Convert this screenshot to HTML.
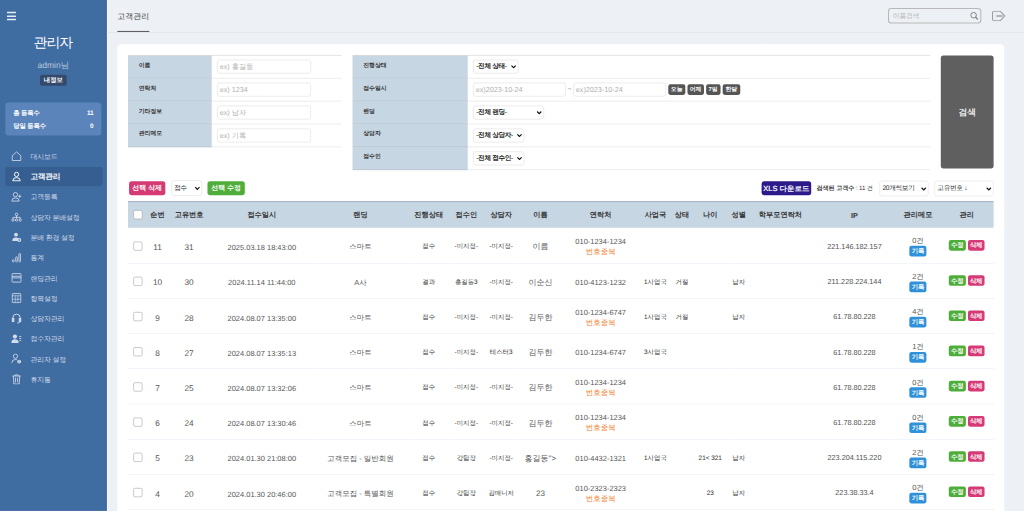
<!DOCTYPE html>
<html lang="ko"><head><meta charset="utf-8"><title>고객관리</title>
<style>
*{box-sizing:border-box;margin:0;padding:0}
html,body{width:1024px;height:511px;overflow:hidden;background:#edf0f5}
body{font-family:"Liberation Sans",sans-serif;color:#333;text-rendering:geometricPrecision}
#root{position:absolute;left:0;top:0;width:1920px;height:958px;transform:scale(0.533333);transform-origin:0 0;background:#edf0f5;overflow:hidden}
/* sidebar */
#side{position:absolute;left:0;top:0;width:200px;height:958px;background:#3f6ca1;color:#fff;box-shadow:inset -1.5px 0 0 #386196, 2px 0 0 #f8f9fc}
.burger{position:absolute;left:13px;top:22px;width:17px;height:16px}
.burger i{position:absolute;left:0;width:17px;height:3px;background:#e8eef6;border-radius:1px}
.sname{position:absolute;left:0;width:200px;top:59px;text-align:center;font-size:26px;line-height:40px;color:#fff;letter-spacing:-2px;text-indent:-2px}
.sadmin{position:absolute;left:0;width:200px;top:111.5px;text-align:center;font-size:16px;line-height:24px;color:#b8c7da}
.sinfo{position:absolute;left:75px;top:140px;width:50px;height:21px;background:#354a6a;border-radius:4px;font-size:12px;line-height:21px;text-align:center;font-weight:bold;color:#fff}
.stats{position:absolute;left:10px;top:192px;width:180px;height:62px;background:#5a84ba;border-radius:6px;font-size:12px;letter-spacing:-0.4px;font-weight:bold;color:#fff}
.stats div{position:absolute;left:15px;right:15px;height:20px;line-height:20px}
.stats b{position:absolute;right:0;top:0}
.menu{position:absolute;left:0;top:274px;width:200px}
.mi{position:relative;height:38px;line-height:40px;font-size:13px;letter-spacing:-0.3px;color:#d3dcea;padding-left:57px}
.mi.act{background:#365e90;margin:0 8px 0 10px;padding-left:47px;color:#fff;font-weight:bold;font-size:14.5px;letter-spacing:-0.5px;border-radius:4px;height:36px;line-height:38px;margin-top:1px;margin-bottom:1px}
.mi svg{position:absolute;left:21px;top:9px;width:20px;height:20px}
.mi.act svg{left:11px;top:8px}
/* header */
#head{position:absolute;left:200px;top:0;width:1720px;height:61px;border-bottom:1px solid #dcdfe6}
.title{position:absolute;left:20px;top:0;height:60px;line-height:58px;padding-top:1.5px;font-size:15px;color:#3a3a3a;border-bottom:2.6px solid #606060}
.hsearch{position:absolute;left:1465px;top:15px;width:175px;height:29px;border:2px solid #b8b8b8;border-radius:6px;font-size:12.5px;line-height:25px;color:#b0b0b0;padding-left:7px}
.hsearch svg{position:absolute;right:3px;top:5px}
.logout{position:absolute;left:1660px;top:20px}
/* card */
#card{position:absolute;left:220px;top:83px;width:1663px;height:900px;background:#fff;border-radius:8px}
.ft{position:absolute;top:20px;border-collapse:collapse;border-top:1.5px solid #c9c9c9}
.ft td{height:43px;border-bottom:1.5px solid rgba(0,0,0,0.14);vertical-align:middle;font-size:12px}
.ft td.lb{background:#c6d6e3;font-weight:bold;color:#333;padding-left:20px;padding-bottom:5px;font-size:11px}
.ft td.in{padding-left:10px}
.inp{display:inline-block;vertical-align:middle;width:176px;height:26px;border:1.5px solid #dcdcdc;border-radius:5px;font-size:13.5px;line-height:24px;color:#b0b0b0;padding-left:4px;white-space:nowrap;overflow:hidden}
.sel{display:inline-block;vertical-align:middle;position:relative;height:26px;border:1.5px solid #dcdcdc;border-radius:5px;font-size:12.5px;line-height:23px;color:#000;padding-left:5px;white-space:nowrap;font-weight:normal;letter-spacing:-0.7px;-webkit-text-stroke:0.3px #000}
.sel svg{position:absolute;right:3px;top:8px}
.dbtn{display:inline-block;vertical-align:middle;height:20px;line-height:20px;background:#555;color:#fff;font-size:11px;font-weight:bold;border-radius:4px;text-align:center;margin-left:4px}
.sbtn{position:absolute;left:1544px;top:21px;width:99px;height:212px;background:#5f5f5f;border-radius:5px;color:#fff;font-size:16.5px;font-weight:normal;-webkit-text-stroke:0.3px #fff;text-align:center;line-height:212px}
/* action row */
.btn{position:absolute;height:26px;line-height:26px;border-radius:5px;color:#fff;font-weight:bold;font-size:13px;text-align:center}
.asel{position:absolute;height:29px;border:1.5px solid #dedede;border-radius:5px;font-size:12.5px;line-height:26px;color:#222;padding-left:4.5px;white-space:nowrap;letter-spacing:-0.6px}
.asel svg{position:absolute;right:3px;top:10px}
.cnttxt{position:absolute;left:1311px;top:263px;font-size:11.5px;letter-spacing:-0.2px;line-height:16px;color:#333;white-space:nowrap}
/* table */
.lt{position:absolute;left:20px;top:294px;width:1623px;border-collapse:collapse;table-layout:fixed}
.lthbg{position:absolute;left:20px;top:294px;width:1623px;height:50px;background:#c6d6e3;border-top:2px solid #a9b5c0}
.lt th{height:50px;font-size:13.5px;font-weight:bold;color:#333;text-align:center;vertical-align:middle;white-space:nowrap;padding-top:3px}
.lt td{height:66px;border-bottom:1.5px solid #e6ebf1;text-align:center;vertical-align:middle;white-space:nowrap;color:#555;line-height:19px}
.cb{display:inline-block;position:relative;top:1.5px;width:17px;height:17px;border:1.5px solid #9d9d9d;border-radius:3px;background:#fff;vertical-align:middle}
.n,.dt,.l,.s,.nm,.ph,.dup,.ip,.cnt{position:relative}
th .cb{top:-1.5px}
.n{font-size:15.5px;color:#555;top:4.5px}
.dt{font-size:14px;color:#555;top:4.5px}
.l{font-size:14px;color:#555;top:3px}
.s{font-size:12px;color:#333;top:1.5px}
.nm{font-size:15px;color:#555;top:3px}
.ph{font-size:14px;color:#555;top:3px}
.dup{font-size:14px;color:#f27a1f;font-weight:normal;top:3px}
.ip{font-size:13.6px;color:#555;top:2px}
.cnt{font-size:14px;color:#555;top:2px}
.bd{display:inline-block;height:20px;line-height:20px;padding:0 4px;border-radius:4px;color:#fff;font-size:12px;font-weight:bold;letter-spacing:-0.3px}
.bd.pk{margin-left:4px}
.bd.bl{position:relative;top:2px}
.bl{background:#2f91da}
.gr{background:#4fae3a}
.pk{background:#d53a76}
</style></head><body>
<div id="root">
 <div id="side">
  <div class="burger"><i style="top:0"></i><i style="top:6.5px"></i><i style="top:13px"></i></div>
  <div class="sname">관리자</div>
  <div class="sadmin">admin님</div>
  <div class="sinfo">내정보</div>
  <div class="stats"><div style="top:9px">총 등록수<b>11</b></div><div style="top:34px">당일 등록수<b>0</b></div></div>
  <div class="menu">
   <div class="mi"><svg viewBox="0 0 20 20" fill="none" stroke="#d3dceb" stroke-width="1.6"><path d="M2 9 L10 2 L18 9 V18 H2 Z"/></svg>대시보드</div>
   <div class="mi act"><svg viewBox="0 0 20 20" fill="none" stroke="#fff" stroke-width="1.8"><circle cx="10" cy="6" r="4"/><path d="M3 18 Q3 12 10 12 Q17 12 17 18 Z"/></svg>고객관리</div>
   <div class="mi"><svg viewBox="0 0 20 20" fill="none" stroke="#d3dceb" stroke-width="1.6"><circle cx="8" cy="6" r="4"/><path d="M1 18 Q1 12 8 12 Q15 12 15 18 Z M16 6 V12 M13 9 H19"/></svg>고객등록</div>
   <div class="mi"><svg viewBox="0 0 20 20" fill="none" stroke="#d3dceb" stroke-width="1.6"><circle cx="10" cy="5" r="2.4"/><circle cx="3.2" cy="15.5" r="2.2"/><circle cx="10" cy="15.5" r="2.2"/><circle cx="16.8" cy="15.5" r="2.2"/><path d="M10 7.4 V13.3 M3.2 13.3 V10.5 H16.8 V13.3"/></svg>상담자 분배설정</div>
   <div class="mi"><svg viewBox="0 0 20 20" fill="#d3dceb"><circle cx="9" cy="5" r="3.6"/><path d="M2 17 Q2 10.5 9 10.5 Q12 10.5 13.5 12 V17 Z"/><circle cx="15" cy="15" r="3.8"/><circle cx="15" cy="15" r="1.5" fill="#3f6ca1"/></svg>분배 환경 설정</div>
   <div class="mi"><svg viewBox="0 0 20 20" fill="none" stroke="#d3dceb" stroke-width="1.6"><rect x="2.5" y="14" width="3" height="4" rx="1"/><rect x="8.5" y="8.5" width="3" height="9.5" rx="1"/><rect x="14.5" y="2.5" width="3" height="15.5" rx="1"/></svg>통계</div>
   <div class="mi"><svg viewBox="0 0 20 20" fill="none" stroke="#d3dceb" stroke-width="1.6"><rect x="1.5" y="2" width="17" height="16" rx="1"/><path d="M1.5 7 H18.5 M1.5 10 H18.5"/></svg>랜딩관리</div>
   <div class="mi"><svg viewBox="0 0 20 20" fill="none" stroke="#d3dceb" stroke-width="1.6"><rect x="2" y="1.5" width="16" height="17" rx="1"/><path d="M2 5.5 H18 M7.5 5.5 V18.5 M12.5 5.5 V18.5 M2 12 H18" stroke-width="1.2"/></svg>항목설정</div>
   <div class="mi"><svg viewBox="0 0 20 20" fill="none" stroke="#d3dceb" stroke-width="1.8"><path d="M3 12 V9 A7 7 0 0 1 17 9 V12"/><rect x="2" y="10" width="3" height="6" fill="#d3dceb"/><rect x="15" y="10" width="3" height="6" fill="#d3dceb"/><path d="M16 16 Q16 19 11 19"/></svg>상담자관리</div>
   <div class="mi"><svg viewBox="0 0 20 20" fill="#d3dceb"><circle cx="7" cy="6" r="4"/><path d="M0 18 Q0 11 7 11 Q14 11 14 18 Z"/><rect x="15" y="5" width="4" height="1.5"/><rect x="15" y="9" width="4" height="1.5"/><rect x="15" y="13" width="4" height="1.5"/></svg>접수자관리</div>
   <div class="mi"><svg viewBox="0 0 20 20" fill="none" stroke="#d3dceb" stroke-width="1.6"><circle cx="8" cy="5" r="4"/><path d="M1 18 Q1 11 8 11 Q10 11 11 12"/><circle cx="15" cy="15" r="3.6" fill="#d3dceb" stroke="none"/><path d="M15 13 V15.5 M15 16.8 V17.4" stroke="#3f6ca1" stroke-width="1.3"/></svg>관리자 설정</div>
   <div class="mi"><svg viewBox="0 0 20 20" fill="none" stroke="#d3dceb" stroke-width="1.6"><path d="M2 4 H18 M7 4 V2 H13 V4 M4 4 L5 19 H15 L16 4 M8 7 V16 M12 7 V16"/></svg>휴지통</div>
  </div>
 </div>
 <div id="head">
  <div class="title">고객관리</div>
  <div class="hsearch">이름검색<svg width="16" height="16" viewBox="0 0 16 16" fill="none" stroke="#808080" stroke-width="1.8"><circle cx="6.5" cy="6.5" r="5.2"/><path d="M10.3 10.3 L14.5 14.5" stroke-width="2.2"/></svg></div>
  <svg class="logout" width="26" height="20" viewBox="0 0 26 20" fill="none" stroke="#a0a0a0" stroke-width="2" stroke-linejoin="round"><path d="M15 1 H4 Q1 1 1 4 V16 Q1 19 4 19 H15 L24 10 Z"/><path d="M8 10 H20" stroke-width="2.6"/></svg>
 </div>
 <div id="card">
  <table class="ft" style="left:20px;width:400px">
   <col style="width:157px"><col>
   <tr><td class="lb">이름</td><td class="in"><span class="inp">ex) 홍길동</span></td></tr>
   <tr><td class="lb">연락처</td><td class="in"><span class="inp">ex) 1234</span></td></tr>
   <tr><td class="lb">기타정보</td><td class="in"><span class="inp">ex) 남자</span></td></tr>
   <tr><td class="lb">관리메모</td><td class="in"><span class="inp">ex) 기록</span></td></tr>
  </table>
  <table class="ft" style="left:441px;width:1083px">
   <col style="width:216px"><col>
   <tr><td class="lb">진행상태</td><td class="in"><span class="sel" style="width:85px">-전체 상태-<svg width="10" height="8" viewBox="0 0 10 8"><path d="M1 2 L5 6 L9 2" stroke="#111" stroke-width="2.2" fill="none"/></svg></span></td></tr>
   <tr><td class="lb">접수일시</td><td class="in"><span class="inp" style="width:174px">ex)2023-10-24</span> <span style="font-size:12px;color:#777">~</span> <span class="inp" style="width:174px">ex)2023-10-24</span><span class="dbtn" style="width:32px">오늘</span><span class="dbtn" style="width:31px">어제</span><span class="dbtn" style="width:27px">7일</span><span class="dbtn" style="width:33px">한달</span></td></tr>
   <tr><td class="lb">랜딩</td><td class="in"><span class="sel" style="width:133px">-전체 랜딩-<svg width="10" height="8" viewBox="0 0 10 8"><path d="M1 2 L5 6 L9 2" stroke="#111" stroke-width="2.2" fill="none"/></svg></span></td></tr>
   <tr><td class="lb">상담자</td><td class="in"><span class="sel" style="width:96px">-전체 상담자-<svg width="10" height="8" viewBox="0 0 10 8"><path d="M1 2 L5 6 L9 2" stroke="#111" stroke-width="2.2" fill="none"/></svg></span></td></tr>
   <tr><td class="lb">접수인</td><td class="in"><span class="sel" style="width:96px">-전체 접수인-<svg width="10" height="8" viewBox="0 0 10 8"><path d="M1 2 L5 6 L9 2" stroke="#111" stroke-width="2.2" fill="none"/></svg></span></td></tr>
  </table>
  <div class="sbtn">검색</div>

  <div class="btn" style="left:22px;top:257px;width:68px;background:#d63a72">선택 삭제</div>
  <div class="asel" style="left:101px;top:255px;width:58px">접수<svg width="10" height="8" viewBox="0 0 10 8"><path d="M1 2 L5 6 L9 2" stroke="#111" stroke-width="2.2" fill="none"/></svg></div>
  <div class="btn" style="left:169px;top:257px;width:70px;background:#4fae3a">선택 수정</div>

  <div class="btn" style="left:1208px;top:257px;width:93px;background:#2b1a8b;font-size:14px;font-weight:normal;-webkit-text-stroke:0.4px #fff">XLS 다운로드</div>
  <div class="cnttxt"><b>검색된 고객수</b> : 11 건</div>
  <div class="asel" style="left:1429px;top:256px;width:92px">20개씩보기<svg width="10" height="8" viewBox="0 0 10 8"><path d="M1 2 L5 6 L9 2" stroke="#111" stroke-width="2.2" fill="none"/></svg></div>
  <div class="asel" style="left:1532px;top:256px;width:111px">고유번호 ↓<svg width="10" height="8" viewBox="0 0 10 8"><path d="M1 2 L5 6 L9 2" stroke="#111" stroke-width="2.2" fill="none"/></svg></div>

  <div class="lthbg"></div>
  <table class="lt">
   <col style="width:37.5px"><col style="width:35.6px"><col style="width:83px"><col style="width:189.6px"><col style="width:180.6px"><col style="width:75px"><col style="width:66px"><col style="width:64.9px"><col style="width:82.1px"><col style="width:144px"><col style="width:61.4px"><col style="width:37.8px"><col style="width:68.6px"><col style="width:38.3px"><col style="width:118px"><col style="width:159.6px"><col style="width:78.5px"><col style="width:104.2px">
   <tr><th><span class="cb"></span></th><th>순번</th><th>고유번호</th><th>접수일시</th><th>랜딩</th><th>진행상태</th><th>접수인</th><th>상담자</th><th>이름</th><th>연락처</th><th>사업국</th><th>상태</th><th>나이</th><th>성별</th><th>학부모연락처</th><th>IP</th><th>관리메모</th><th>관리</th></tr>
   <tr><td><span class="cb"></span></td><td><span class="n">11</span></td><td><span class="n">31</span></td><td><span class="dt">2025.03.18 18:43:00</span></td><td><span class="l">스마트</span></td><td><span class="s">접수</span></td><td><span class="s">-미지정-</span></td><td><span class="s">-미지정-</span></td><td><span class="nm">이름</span></td><td><span class="ph">010-1234-1234</span><br><span class="dup">번호중복</span></td><td><span class="s"></span></td><td><span class="s"></span></td><td><span class="s"></span></td><td><span class="s"></span></td><td><span class="s"></span></td><td><span class="ip">221.146.182.157</span></td><td><span class="cnt">0건</span><br><span class="bd bl">기록</span></td><td><span class="bd gr">수정</span><span class="bd pk">삭제</span></td></tr>
<tr><td><span class="cb"></span></td><td><span class="n">10</span></td><td><span class="n">30</span></td><td><span class="dt">2024.11.14 11:44:00</span></td><td><span class="l">A사</span></td><td><span class="s">결과</span></td><td><span class="s">홍길동3</span></td><td><span class="s">-미지정-</span></td><td><span class="nm">이순신</span></td><td><span class="ph">010-4123-1232</span></td><td><span class="s">1사업국</span></td><td><span class="s">거절</span></td><td><span class="s"></span></td><td><span class="s">남자</span></td><td><span class="s"></span></td><td><span class="ip">211.228.224.144</span></td><td><span class="cnt">2건</span><br><span class="bd bl">기록</span></td><td><span class="bd gr">수정</span><span class="bd pk">삭제</span></td></tr>
<tr><td><span class="cb"></span></td><td><span class="n">9</span></td><td><span class="n">28</span></td><td><span class="dt">2024.08.07 13:35:00</span></td><td><span class="l">스마트</span></td><td><span class="s">접수</span></td><td><span class="s">-미지정-</span></td><td><span class="s">-미지정-</span></td><td><span class="nm">김두한</span></td><td><span class="ph">010-1234-6747</span><br><span class="dup">번호중복</span></td><td><span class="s">1사업국</span></td><td><span class="s">거절</span></td><td><span class="s"></span></td><td><span class="s">남자</span></td><td><span class="s"></span></td><td><span class="ip">61.78.80.228</span></td><td><span class="cnt">4건</span><br><span class="bd bl">기록</span></td><td><span class="bd gr">수정</span><span class="bd pk">삭제</span></td></tr>
<tr><td><span class="cb"></span></td><td><span class="n">8</span></td><td><span class="n">27</span></td><td><span class="dt">2024.08.07 13:35:13</span></td><td><span class="l">스마트</span></td><td><span class="s">접수</span></td><td><span class="s">-미지정-</span></td><td><span class="s">테스터3</span></td><td><span class="nm">김두한</span></td><td><span class="ph">010-1234-6747</span></td><td><span class="s">3사업국</span></td><td><span class="s"></span></td><td><span class="s"></span></td><td><span class="s"></span></td><td><span class="s"></span></td><td><span class="ip">61.78.80.228</span></td><td><span class="cnt">1건</span><br><span class="bd bl">기록</span></td><td><span class="bd gr">수정</span><span class="bd pk">삭제</span></td></tr>
<tr><td><span class="cb"></span></td><td><span class="n">7</span></td><td><span class="n">25</span></td><td><span class="dt">2024.08.07 13:32:06</span></td><td><span class="l">스마트</span></td><td><span class="s">접수</span></td><td><span class="s">-미지정-</span></td><td><span class="s">-미지정-</span></td><td><span class="nm">김두한</span></td><td><span class="ph">010-1234-1234</span><br><span class="dup">번호중복</span></td><td><span class="s"></span></td><td><span class="s"></span></td><td><span class="s"></span></td><td><span class="s"></span></td><td><span class="s"></span></td><td><span class="ip">61.78.80.228</span></td><td><span class="cnt">0건</span><br><span class="bd bl">기록</span></td><td><span class="bd gr">수정</span><span class="bd pk">삭제</span></td></tr>
<tr><td><span class="cb"></span></td><td><span class="n">6</span></td><td><span class="n">24</span></td><td><span class="dt">2024.08.07 13:30:46</span></td><td><span class="l">스마트</span></td><td><span class="s">접수</span></td><td><span class="s">-미지정-</span></td><td><span class="s">-미지정-</span></td><td><span class="nm">김두한</span></td><td><span class="ph">010-1234-1234</span><br><span class="dup">번호중복</span></td><td><span class="s"></span></td><td><span class="s"></span></td><td><span class="s"></span></td><td><span class="s"></span></td><td><span class="s"></span></td><td><span class="ip">61.78.80.228</span></td><td><span class="cnt">0건</span><br><span class="bd bl">기록</span></td><td><span class="bd gr">수정</span><span class="bd pk">삭제</span></td></tr>
<tr><td><span class="cb"></span></td><td><span class="n">5</span></td><td><span class="n">23</span></td><td><span class="dt">2024.01.30 21:08:00</span></td><td><span class="l">고객모집 - 일반회원</span></td><td><span class="s">접수</span></td><td><span class="s">강팀장</span></td><td><span class="s">-미지정-</span></td><td><span class="nm">홍길동&quot;&gt;</span></td><td><span class="ph">010-4432-1321</span></td><td><span class="s">1사업국</span></td><td><span class="s"></span></td><td><span class="s">21&lt; 321</span></td><td><span class="s">남자</span></td><td><span class="s"></span></td><td><span class="ip">223.204.115.220</span></td><td><span class="cnt">2건</span><br><span class="bd bl">기록</span></td><td><span class="bd gr">수정</span><span class="bd pk">삭제</span></td></tr>
<tr><td><span class="cb"></span></td><td><span class="n">4</span></td><td><span class="n">20</span></td><td><span class="dt">2024.01.30 20:46:00</span></td><td><span class="l">고객모집 - 특별회원</span></td><td><span class="s">접수</span></td><td><span class="s">강팀장</span></td><td><span class="s">김매니저</span></td><td><span class="nm">23</span></td><td><span class="ph">010-2323-2323</span><br><span class="dup">번호중복</span></td><td><span class="s"></span></td><td><span class="s"></span></td><td><span class="s">23</span></td><td><span class="s">남자</span></td><td><span class="s"></span></td><td><span class="ip">223.38.33.4</span></td><td><span class="cnt">0건</span><br><span class="bd bl">기록</span></td><td><span class="bd gr">수정</span><span class="bd pk">삭제</span></td></tr>
  </table>
 </div>
</div>
</body></html>
